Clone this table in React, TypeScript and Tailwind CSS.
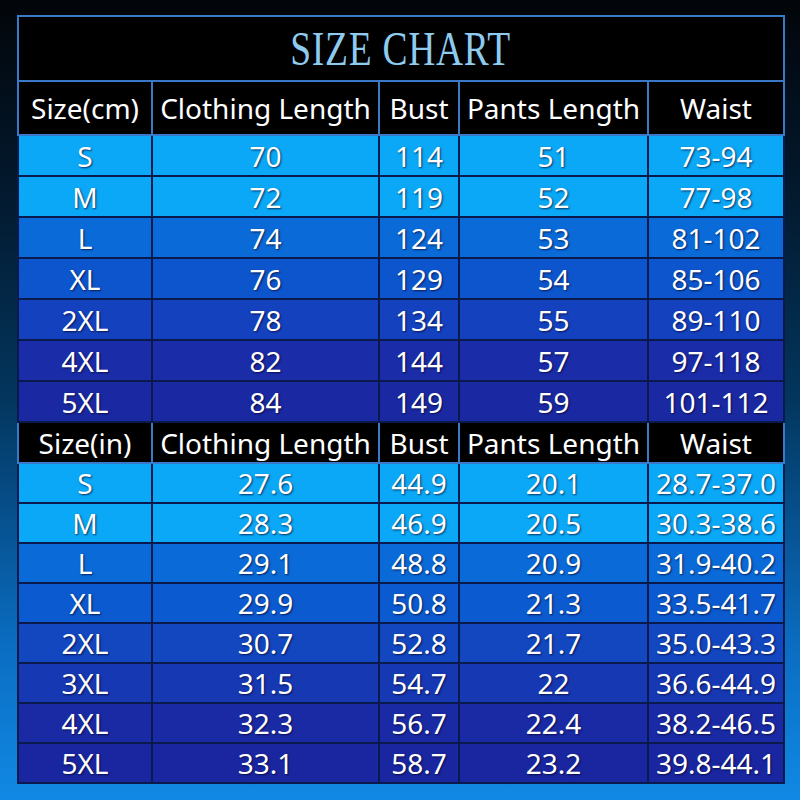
import React from 'react';

type Row = [string, string, string, string, string];

const cmRows: Row[] = [
  ['S', '70', '114', '51', '73-94'],
  ['M', '72', '119', '52', '77-98'],
  ['L', '74', '124', '53', '81-102'],
  ['XL', '76', '129', '54', '85-106'],
  ['2XL', '78', '134', '55', '89-110'],
  ['4XL', '82', '144', '57', '97-118'],
  ['5XL', '84', '149', '59', '101-112'],
];

const inRows: Row[] = [
  ['S', '27.6', '44.9', '20.1', '28.7-37.0'],
  ['M', '28.3', '46.9', '20.5', '30.3-38.6'],
  ['L', '29.1', '48.8', '20.9', '31.9-40.2'],
  ['XL', '29.9', '50.8', '21.3', '33.5-41.7'],
  ['2XL', '30.7', '52.8', '21.7', '35.0-43.3'],
  ['3XL', '31.5', '54.7', '22', '36.6-44.9'],
  ['4XL', '32.3', '56.7', '22.4', '38.2-46.5'],
  ['5XL', '33.1', '58.7', '23.2', '39.8-44.1'],
];

// row fills, light sky at top fading to deep indigo
const cmColors = ['bg-[#0aa8f6]', 'bg-[#0aa8f6]', 'bg-[#0a6ad8]', 'bg-[#0d55cc]', 'bg-[#1442bf]', 'bg-[#1a2ca8]', 'bg-[#1a29a2]'];
const inColors = ['bg-[#0aa8f6]', 'bg-[#0aa8f6]', 'bg-[#0a6ad8]', 'bg-[#0c5acf]', 'bg-[#1247c0]', 'bg-[#1738b3]', 'bg-[#1a2aa5]', 'bg-[#1a26a0]'];

const Header = ({ unit, h }: { unit: string; h: string }) => (
  <tr className={`${h} bg-black`}>
    {[`Size(${unit})`, 'Clothing Length', 'Bust', 'Pants Length', 'Waist'].map((t) => (
      <td key={t} className="border-2 border-[#3a78c8] text-center text-white p-0 whitespace-nowrap">
        {t}
      </td>
    ))}
  </tr>
);

const DataRow = ({ row, color, h }: { row: Row; color: string; h: string }) => (
  <tr className={`${h} ${color}`}>
    {row.map((v, i) => (
      <td
        key={i}
        className="border-2 border-[#0b1a4c] text-center text-white p-0 whitespace-nowrap [text-shadow:1px_1px_2px_rgba(0,0,40,0.7)]"
      >
        {v}
      </td>
    ))}
  </tr>
);

export default function App() {
  return (
    <div className="w-[800px] h-[800px] overflow-hidden bg-[linear-gradient(to_bottom,#020509_0%,#031a30_25%,#03365e_50%,#0a6cc0_80%,#1189e4_100%)] pt-[15px] px-[17px]">
      <table
        className="table-fixed border-collapse w-[766px] text-[28px] leading-none"
        style={{ fontFamily: '"Noto Sans", "Open Sans", sans-serif' }}
      >
        <colgroup>
          <col className="w-[134px]" />
          <col className="w-[227px]" />
          <col className="w-[80px]" />
          <col className="w-[189px]" />
          <col className="w-[136px]" />
        </colgroup>
        <tbody>
          <tr className="h-[65px] bg-black">
            <td colSpan={5} className="border-2 border-[#3a78c8] p-0 text-center">
              <span
                className="inline-block text-[48px] text-[#8ecbef] tracking-[1px] scale-x-[0.78]"
                style={{ fontFamily: '"Liberation Serif", "DejaVu Serif", serif' }}
              >
                SIZE CHART
              </span>
            </td>
          </tr>
          <Header unit="cm" h="h-[54px]" />
          {cmRows.map((r, i) => (
            <DataRow key={r[0]} row={r} color={cmColors[i]} h="h-[41px]" />
          ))}
          <Header unit="in" h="h-[41px]" />
          {inRows.map((r, i) => (
            <DataRow key={r[0]} row={r} color={inColors[i]} h="h-[40px]" />
          ))}
        </tbody>
      </table>
    </div>
  );
}
